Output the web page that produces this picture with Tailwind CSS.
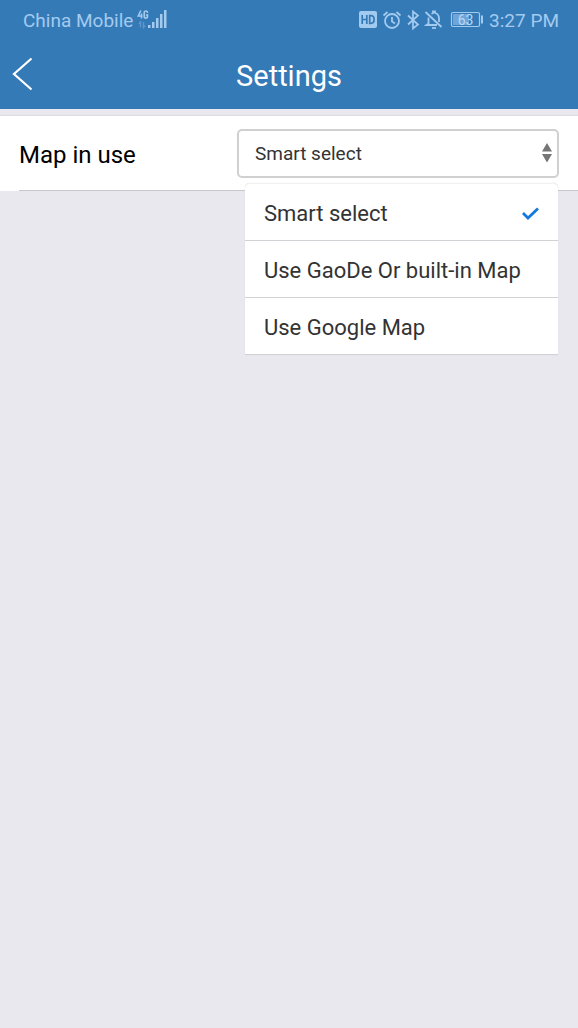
<!DOCTYPE html>
<html lang="en">
<head>
<meta charset="utf-8">
<meta name="viewport" content="width=device-width, initial-scale=1">
<title>Settings</title>
<script src="https://cdn.jsdelivr.net/npm/@tailwindcss/browser@4"></script>
</head>
<body class="min-h-screen bg-[#e9e8ef] font-['Roboto',sans-serif] text-black">
<header class="bg-[#347ab7]">
  <div class="flex h-10 items-center justify-between pr-[19px] pl-[23px] text-[#a3caef]">
    <div class="flex items-center gap-1">
      <span class="pt-[2px] text-[19px] leading-6">China Mobile</span>
      <svg class="h-5 w-[30px]" viewBox="0 0 30 20" fill="none" aria-label="4G signal">
        <path d="M3.800.5 1.200 6h4.300M4.500 3.500v5M10.500 3c0-2.600-3.300-2.600-3.300 0v3.200c0 2.600 3.300 2.600 3.300 0V5H8.800" stroke="currentColor" stroke-width="1.600"/>
        <path d="M3.500 17.500V12L2 14M6.500 12v5.500L8 15.500" stroke="#5f98cf" stroke-width="1.300"/>
        <path d="M11 15h2.500v3H11zM15 12h2.500v6H15zM19 8h2.500v10H19zM23 4h2.500v14H23zM27 0h2.500v18H27z" fill="currentColor"/>
      </svg>
    </div>
    <div class="flex items-center">
      <svg class="mr-[5px] h-[18px] w-[18px]" viewBox="0 0 18 18" aria-label="HD">
        <rect width="18" height="17" rx="2" fill="currentColor"/>
        <path d="M3.200 4v9M7.800 4v9M3.200 8.500h4.600M10.700 4.700v7.600h1.100c2.800 0 3.300-1.300 3.300-3.800s-.5-3.800-3.300-3.800z" fill="none" stroke="#347ab7" stroke-width="1.700"/>
      </svg>
      <svg class="mr-[2px] h-5 w-5" viewBox="0 0 20 20" fill="none" stroke="currentColor" stroke-width="1.800" aria-label="Alarm">
        <circle cx="10" cy="11" r="7"/><path d="M10 7v4.500l3 2M1.500 5.500 5.500 2M14.500 2l4 3.500"/>
      </svg>
      <svg class="mr-[2px] h-5 w-[18px]" viewBox="0 0 18 20" fill="none" stroke="currentColor" stroke-width="1.700" aria-label="Bluetooth">
        <path d="m4 5.500 10 9-5 4V1.500l5 4-10 9"/>
      </svg>
      <svg class="mr-[6px] h-5 w-5" viewBox="0 0 20 20" fill="none" stroke="currentColor" stroke-width="1.800" aria-label="Notifications muted">
        <path d="m1.500 2 16 15M15 12V8.500c0-3-2-5-4-5.500V1.500H9V3l-1.500.7M4.500 7.500v6l-2 1.500H13"/><path d="M8 18h4"/>
      </svg>
      <svg class="mr-1 h-[18px] w-[34px]" viewBox="0 0 34 18" aria-label="Battery 63%">
        <rect x="1.500" y="1.500" width="28" height="14" rx="1.500" fill="none" stroke="currentColor" stroke-width="1.200"/>
        <rect x="3" y="3" width="16" height="11" fill="#6fa5d8"/>
        <path d="M31 4.500h2v8h-2z" fill="currentColor"/>
        <text x="15.500" y="13.500" text-anchor="middle" font-size="14" fill="#b9d8f5">63</text>
      </svg>
      <time class="pt-[2px] pl-px text-[19px] leading-6 whitespace-nowrap">3:27 PM</time>
    </div>
  </div>
  <div class="grid h-[69px] grid-cols-[1fr_auto_1fr] items-center text-white">
    <button type="button" aria-label="Back" class="h-full w-12 pl-3">
      <svg class="h-9 w-6" viewBox="0 0 24 36" fill="none" stroke="currentColor" stroke-width="2.200"><path d="M19.500 1.500 2 17l17.500 15.500"/></svg>
    </button>
    <h1 class="pt-[2px] text-[29px] leading-8">Settings</h1>
  </div>
</header>
<main class="pt-[6px]">
  <section class="flex h-[76px] items-center border-t border-[#dddde0] bg-white bg-[linear-gradient(#c8c7cc,#c8c7cc)] bg-[length:100%_1px] bg-[position:19px_100%] bg-no-repeat px-[19px]">
    <label for="map" class="flex-1 pt-[2px] text-[24px] leading-8">Map in use</label>
    <div class="relative w-[322px]">
      <select id="map" class="block h-[49px] w-full appearance-none rounded-[5px] border-2 border-[#d0d0d0] bg-white pt-[2px] pr-6 pl-4 text-[19px] text-[#333333]">
        <option>Smart select</option><option>Use GaoDe Or built-in Map</option><option>Use Google Map</option>
      </select>
      <svg class="pointer-events-none absolute top-[14px] right-[7px] h-5 w-[10px]" viewBox="0 0 10 20" fill="#757575"><path d="m5 0 5 8.500H0zM0 11h10l-5 8.500z"/></svg>
      <ul role="listbox" aria-label="Map in use" class="absolute top-full right-px left-2 mt-[5px] rounded-t-[5px] border-t border-[#f2f2f2] bg-white text-[22px] leading-7 text-[#333333] shadow-[0_0_1px_#c8c7cc]">
        <li role="option" aria-selected="true" class="border-b border-[#d2d2d6]"><button type="button" class="flex h-14 w-full items-center justify-between px-[19px] pt-1">Smart select
          <svg class="h-4 w-[17px]" viewBox="0 0 17 16" fill="none" stroke="#1578dc" stroke-width="2.800"><path d="m1 7 5 5L16 2.500"/></svg></button></li>
        <li role="option" aria-selected="false" class="border-b border-[#d2d2d6]"><button type="button" class="flex h-14 w-full items-center px-[19px] pt-1 whitespace-nowrap">Use GaoDe Or built-in Map</button></li>
        <li role="option" aria-selected="false" class="border-b border-[#d2d2d6]"><button type="button" class="flex h-14 w-full items-center px-[19px] pt-1">Use Google Map</button></li>
      </ul>
    </div>
  </section>
</main>
</body>
</html>
